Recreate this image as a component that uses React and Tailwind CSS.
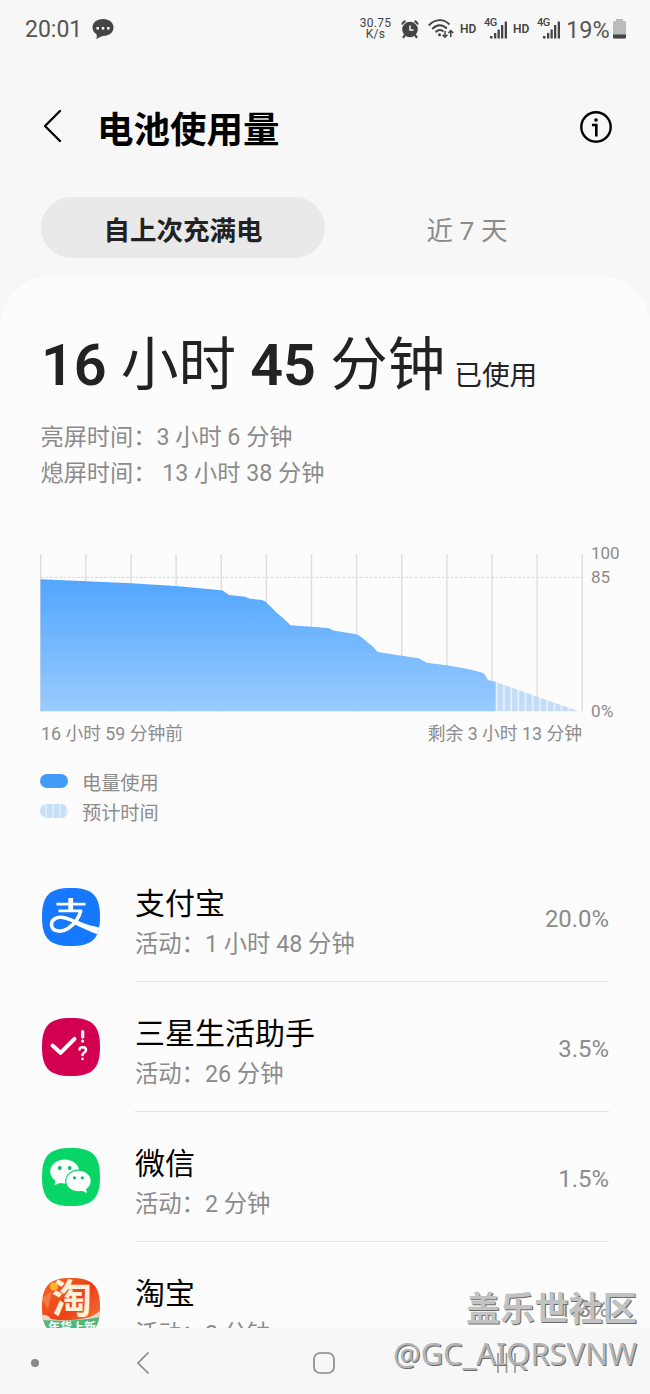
import React from 'react';

const SQUIRCLE = 'M29 0C50.5 0 58 7.5 58 29S50.5 58 29 58 0 50.5 0 29 7.5 0 29 0Z';

const LEVEL =
  'M40.5 579.3L86.7 581.3 131 583.3 176 586 221 590.3Q224 590.5 225.500 592.500L229 595 245 596.700 250 598.700 262 600Q266 601 268 604L276.700 612.700 283 618 290.700 625.300 311.700 626.700 328 628Q331 628.500 333 630.500L355 634Q359 635 361.700 637.300L366.700 641.700 373 646.700 377.700 652 401.700 655.700 419 658.300 426.700 662.700 446.700 665.300 468 669 481 672.300Q484 673 485 675L488 680 495.700 681.900V711.300H40.500Z';

const apps = [
  { name: '支付宝', time: '1 小时 48 分钟', percent: '20.0%', Icon: AlipayIcon },
  { name: '三星生活助手', time: '26 分钟', percent: '3.5%', Icon: AssistantIcon },
  { name: '微信', time: '2 分钟', percent: '1.5%', Icon: WechatIcon },
  { name: '淘宝', time: '2 分钟', percent: '1.3%', Icon: TaobaoIcon },
];

function AlipayIcon() {
  return (
    <svg viewBox="0 0 58 58" className="size-[58px]">
      <clipPath id="alipay"><path d={SQUIRCLE} /></clipPath>
      <path d={SQUIRCLE} fill="#1677ff" />
      <g clipPath="url(#alipay)" fill="none" stroke="#fff">
        <path d="M14.500 16.200H43.500M16.500 22.800H40" strokeWidth="2.800" />
        <path d="M28.700 10V23" strokeWidth="4.800" />
        <path d="M39 22C37 30 32 36.500 26 40.500C19 45 9.500 43.500 9.500 36.500C9.500 31 15 28.500 21 29.500C28 30.800 34 34 40 36.800" strokeWidth="3.600" />
        <path d="M33 31.500C41 35.500 48 37.500 58 39.500L56 46.500C48 43.500 40 40 31 35.500Z" fill="#fff" stroke="none" />
      </g>
    </svg>
  );
}

function AssistantIcon() {
  return (
    <svg viewBox="0 0 58 58" className="size-[58px]">
      <path d={SQUIRCLE} fill="#d3004f" />
      <g fill="none" stroke="#fff" strokeLinecap="round">
        <path d="M10.500 27.500L18.500 34.800L32.500 20.800" strokeWidth="4" strokeLinejoin="round" />
        <path d="M40.700 13.500V19M40.700 23V23.100" strokeWidth="3.200" />
        <path d="M37.500 31.500C38 28.500 44 28.500 44 32C44 35 40.500 34.500 40.500 37M40.500 40.800V41" strokeWidth="2.500" />
      </g>
    </svg>
  );
}

function WechatIcon() {
  return (
    <svg viewBox="0 0 58 58" className="size-[58px]">
      <path d={SQUIRCLE} fill="#07d566" />
      <path d="M14 31L12.500 37.200L20 34Z" fill="#fff" />
      <ellipse cx="22.700" cy="23.500" rx="14.500" ry="12" fill="#fff" />
      <circle cx="17.800" cy="20" r="1.900" fill="#07c160" />
      <circle cx="27.700" cy="20" r="1.900" fill="#07c160" />
      <ellipse cx="36.500" cy="33" rx="13.300" ry="11.400" fill="#07d566" />
      <path d="M38 42L45 45L43.500 39Z" fill="#fff" />
      <ellipse cx="36.500" cy="33" rx="12.200" ry="10.300" fill="#fff" />
      <circle cx="32.500" cy="29.800" r="1.600" fill="#07c160" />
      <circle cx="40.300" cy="29.800" r="1.600" fill="#07c160" />
    </svg>
  );
}

function TaobaoIcon() {
  return (
    <svg viewBox="0 0 58 58" className="size-[58px]">
      <defs>
        <clipPath id="taobao"><path d={SQUIRCLE} /></clipPath>
        <linearGradient id="taobao-bg" x1="0" y1="0" x2="1" y2="1">
          <stop offset="0" stopColor="#f26a22" />
          <stop offset="0.500" stopColor="#ee3f18" />
          <stop offset="1" stopColor="#f58a4a" />
        </linearGradient>
      </defs>
      <g clipPath="url(#taobao)">
        <rect width="58" height="58" fill="url(#taobao-bg)" />
        <path d="M0 20L10 13L6 32Z" fill="#f79a6a" opacity="0.500" />
        <path d="M0 37Q5 36 9 41Q26 44 44 40Q50 39 58 33V48H0Z" fill="#f6d3c6" />
        <path d="M0 42Q14 43 29 42.500T58 39V58H0Z" fill="#4db877" />
        <text x="30" y="34.500" textAnchor="middle" fontSize="40" fontWeight="700" fill="#fff0d8" fontFamily="'Noto Sans CJK SC', sans-serif">淘</text>
        <circle cx="12" cy="8.500" r="4" fill="#fdb52c" />
        <text x="30" y="53.500" textAnchor="middle" fontSize="12" fontWeight="700" fill="#fff" fontFamily="'Noto Sans CJK SC', sans-serif">年货上新</text>
      </g>
    </svg>
  );
}

function Signal() {
  return (
    <div className="flex h-[22px] w-[24px] shrink-0">
      <span className="text-[11px] font-medium leading-[10px] tracking-[-0.5px]">4G</span>
      <svg viewBox="0 0 18 20" className="-ml-[7px] mt-[1px] h-[20px] w-[18px] shrink-0" fill="#444">
        <rect x="0" y="17" width="2.500" height="2.500" />
        <rect x="4" y="14" width="2.300" height="5.500" />
        <rect x="7.500" y="10.500" width="2.300" height="9" />
        <rect x="11" y="6" width="2.300" height="13.500" />
        <rect x="14.700" y="2.500" width="2.300" height="17" />
      </svg>
    </div>
  );
}

function StatusBar() {
  return (
    <div className="flex h-[58px] items-center justify-between pl-[25px] pr-[24px] text-[#444]">
      <div className="flex items-center gap-[10px]">
        <span className="mt-[1px] text-[23px] leading-[24px] text-[#555]">20:01</span>
        <svg viewBox="0 0 22 22" className="size-[22px]">
          <path d="M11 1C17.500 1 21.500 4.800 21.500 9.500S17.500 18 11 18C9 18 5.500 21 4 21C5.300 19.300 5 17.500 4.200 16C1.800 14.500 .5 12 .5 9.500C.5 4.800 4.500 1 11 1Z" fill="#444" />
          <path d="M4.500 9h2.400v2.400H4.500ZM9.800 9h2.400v2.400H9.800ZM15.100 9h2.400v2.400H15.100Z" fill="#fff" />
        </svg>
      </div>
      <div className="flex items-center">
        <div className="w-[33px] text-center text-[12px] leading-[11px] tracking-[0.3px]">
          <p>30.75</p>
          <p>K/s</p>
        </div>
        <svg viewBox="0 0 18 20" className="ml-[9px] h-[20px] w-[18px]" fill="none" stroke="#444">
          <circle cx="9" cy="10.500" r="7.800" fill="#444" stroke="none" />
          <path d="M1 5.500Q2 3 4.500 2M17 5.500Q16 3 13.500 2" strokeWidth="2" />
          <path d="M4 16L2 18.800M14 16L16 18.800" strokeWidth="2.200" />
          <path d="M9 6.500V11H12.500" stroke="#f7f7f7" strokeWidth="1.500" />
        </svg>
        <svg viewBox="0 0 26 22" className="ml-[9px] h-[22px] w-[26px]" fill="none" stroke="#444" strokeWidth="1.900">
          <path d="M.8 7.500C7 .5 16 .5 21.500 6.500M4.200 11C9 6 14.500 6 18.800 10.500M7.500 14.200C10.300 11.500 13 11.500 15.500 13.500" />
          <circle cx="11.500" cy="16.800" r="1.500" fill="#444" stroke="none" />
          <path d="M17 13V19M14.500 16.800L17 19.300L19.500 16.800M22.800 19V13M20.300 15L22.800 12.500L25.300 15" strokeWidth="1.500" />
        </svg>
        <span className="ml-[6px] w-[17px] text-[12px] font-semibold leading-[12px]">HD</span>
        <div className="ml-[7px]"><Signal /></div>
        <span className="ml-[5px] w-[17px] text-[12px] font-semibold leading-[12px]">HD</span>
        <div className="ml-[7px]"><Signal /></div>
        <span className="ml-[5px] mt-[1px] w-[44px] text-[23.500px] leading-[24px] text-[#555]">19%</span>
        <svg viewBox="0 0 13 20" className="ml-[3px] h-[20px] w-[13px]">
          <path d="M3 0H10V2H11.500Q13 2 13 3.500V18Q13 19.500 11.500 19.500H1.500Q0 19.500 0 18V3.500Q0 2 1.500 2H3Z" fill="#bbb" />
          <path d="M0 15.500H13V18Q13 19.500 11.500 19.500H1.500Q0 19.500 0 18Z" fill="#444" />
        </svg>
      </div>
    </div>
  );
}

function BatteryChart() {
  return (
    <div className="mt-[62px] flex">
      <div className="w-[543px]">
        <svg viewBox="40 553 543 159" className="h-[159px] w-[543px]">
          <defs>
            <linearGradient id="level" x1="0" y1="0" x2="0" y2="1">
              <stop offset="0" stopColor="#52a6fe" />
              <stop offset="1" stopColor="#99cbff" />
            </linearGradient>
            <pattern id="stripes" x="495.700" width="7.200" height="10" patternUnits="userSpaceOnUse">
              <rect width="7.200" height="10" fill="#e2effc" />
              <rect x="2" width="5.200" height="10" fill="#c2dcf7" />
            </pattern>
          </defs>
          {Array.from({ length: 13 }, (_, i) => (
            <path key={i} d={`M${40.7 + i * 45.13} 554V711.500`} stroke="#ddd" strokeWidth="1.400" />
          ))}
          <path d="M41 577.300H582" stroke="#ddd" strokeWidth="1.200" strokeDasharray="3 1.500" />
          <path d="M495.700 681.900L578.500 711.300H495.700Z" fill="url(#stripes)" />
          <path d={LEVEL} fill="url(#level)" />
        </svg>
        <div className="mt-[11px] flex justify-between pl-[1px] pr-[1px] text-[17.800px] leading-[22px] text-[#8b8b8b]">
          <span>16 小时 59 分钟前</span>
          <span>剩余 3 小时 13 分钟</span>
        </div>
      </div>
      <div className="-mt-[10px] ml-[8px] flex h-[178px] flex-col text-[17px] leading-[20px] text-[#8b8b8b]">
        <span>100</span>
        <span className="mt-[4px]">85</span>
        <span className="mt-auto tracking-[0.5px]">0%</span>
      </div>
    </div>
  );
}

function Legend() {
  return (
    <div className="mt-[24px] text-[19.200px] leading-[30px] text-[#8b8b8b]">
      <div className="flex h-[30px] items-center gap-[14px]">
        <span className="-mt-[6px] h-[14px] w-[28px] rounded-full bg-[#429bf7]" />
        电量使用
      </div>
      <div className="flex h-[30px] items-center gap-[14px]">
        <span className="-mt-[6px] h-[14px] w-[28px] rounded-full bg-[repeating-linear-gradient(90deg,#c8dff8_0_5px,#dcebfb_5px_7px)]" />
        预计时间
      </div>
    </div>
  );
}

function AppRow({ name, time, percent, Icon }) {
  return (
    <div className="flex h-[130px] shrink-0 pl-[2px]">
      <div className="pt-[36px]"><Icon /></div>
      <div className="ml-[35px] flex w-[474px] items-start justify-between border-b-[1.500px] border-[#e3e3e3]">
        <div className="pt-[32px]">
          <p className="text-[30px] leading-[40px] text-black">{name}</p>
          <p className="text-[23.300px] leading-[40px] text-[#8b8b8b]">活动：{time}</p>
        </div>
        <span className="pt-[47px] text-[23.900px] leading-[40px] text-[#8b8b8b]">{percent}</span>
      </div>
    </div>
  );
}

function NavBar() {
  return (
    <div className="flex h-[66px] items-center bg-[#f7f7f7] pl-[31px] pt-[4px]">
      <span className="size-[8px] rounded-full bg-[#888]" />
      <svg viewBox="0 0 14 24" className="ml-[97px] h-[24px] w-[14px]" fill="none" stroke="#888" strokeWidth="1.700">
        <path d="M12.500 1.500L2 12L12.500 22.500" />
      </svg>
      <svg viewBox="0 0 22 22" className="ml-[163px] size-[22px]" fill="none" stroke="#888" strokeWidth="1.700">
        <rect x="1" y="1" width="20" height="20" rx="6" />
      </svg>
      <svg viewBox="0 0 20 22" className="ml-[162px] h-[22px] w-[20px]" stroke="#999" strokeWidth="1.700">
        <path d="M1 1V21M9.500 1V21M18 1V21" />
      </svg>
    </div>
  );
}

export default function App() {
  return (
    <div className="relative flex h-[1394px] w-[650px] flex-col overflow-hidden bg-[#f7f7f7] font-['Roboto','Noto_Sans_CJK_SC',sans-serif]">
      <StatusBar />

      {/* Title */}
      <div className="flex h-[139px] items-center pl-[43px] pr-[38px] pb-[2px]">
        <svg viewBox="0 0 20 34" className="-mt-[1px] h-[34px] w-[20px]" fill="none" stroke="#000" strokeWidth="2.300" strokeLinecap="round" strokeLinejoin="round">
          <path d="M17 2L2 17L17 32" />
        </svg>
        <h1 className="ml-[34px] mt-[9px] flex-1 text-[36.500px] font-bold leading-[44px] text-black">电池使用量</h1>
        <svg viewBox="0 0 32 32" className="size-[32px]" fill="none" stroke="#000" strokeWidth="2.400">
          <circle cx="16" cy="16" r="14.700" />
          <circle cx="16" cy="9" r="1.800" fill="#000" stroke="none" />
          <path d="M12 14H16.300V25.500" strokeWidth="2.600" />
        </svg>
      </div>

      {/* Tabs */}
      <div className="flex h-[61px] px-[41px] text-[26.500px] leading-[67px]">
        <div className="w-[284px] rounded-full bg-[#e9e9e9] text-center font-bold text-[#222]">自上次充满电</div>
        <div className="flex-1 text-center text-[#8b8b8b]">近 7 天</div>
      </div>

      <div className="mt-[18px] flex h-[1052px] flex-col overflow-hidden rounded-t-[50px] bg-[#fcfcfc] pl-[40px]">
        <div className="mt-[54px] flex h-[72px] items-baseline whitespace-nowrap pl-[1px] leading-[72px] text-[#222]">
          <p className="text-[57.500px]"><span className="font-semibold">16</span> 小时 <span className="font-semibold">45</span> 分钟</p>
          <p className="ml-[9px] text-[27.700px]">已使用</p>
        </div>
        <div className="mt-[18px] pl-[0.500px] text-[23.200px] leading-[35.500px] text-[#8b8b8b]">
          <p>亮屏时间：3 小时 6 分钟</p>
          <p>熄屏时间： 13 小时 38 分钟</p>
        </div>
        <BatteryChart />
        <Legend />
        <div className="mt-[23px] flex flex-col">
          {apps.map((app) => (
            <AppRow key={app.name} {...app} />
          ))}
        </div>
      </div>

      <NavBar />

      {/* Watermark */}
      <div className="absolute right-[13px] top-[1287px] whitespace-nowrap text-right">
        <p className="text-[34.200px] font-bold leading-[44px] text-[#c2c2c2] [text-shadow:1px_1px_0_#6b6b6b]">盖乐世社区</p>
        <p className="font-['Noto_Sans',sans-serif] text-[30.800px] leading-[44px] text-[#b5b5b5] [text-shadow:1px_1px_0_#6b6b6b]">@GC_AIQRSVNW</p>
      </div>
    </div>
  );
}
